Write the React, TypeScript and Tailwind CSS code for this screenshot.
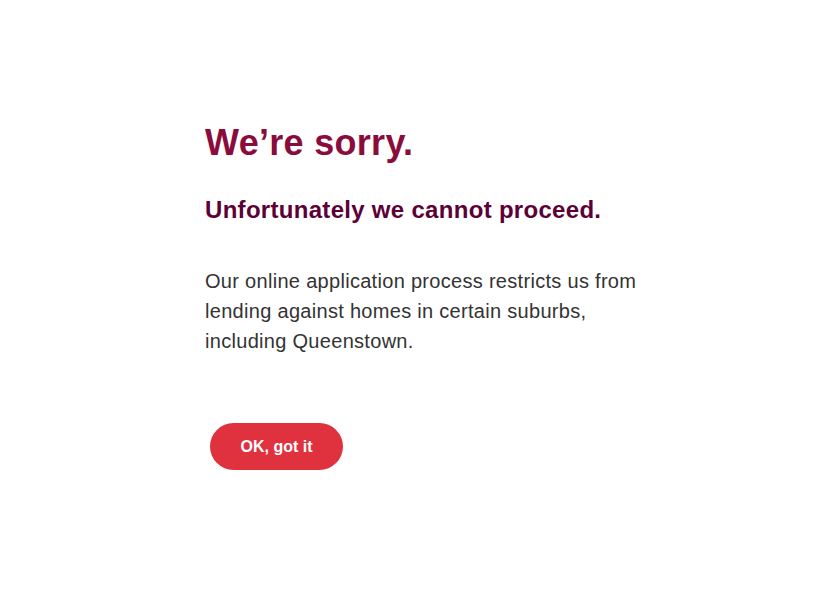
export default function App() {
  return (
    <div
      className="min-h-screen bg-white"
      style={{ fontFamily: '"Liberation Sans", Arial, sans-serif' }}
    >
      <div className="pl-[205px] pt-[123px]">
        <h1 className="text-[36px] leading-[40px] font-bold tracking-[0.3px] text-[#8a0c3d]">
          We’re sorry.
        </h1>
        <h2 className="mt-[33px] text-[24px] leading-[28px] font-bold tracking-[0.3px] text-[#5c0136]">
          Unfortunately we cannot proceed.
        </h2>
        <p className="mt-[42px] w-[450px] text-[20px] leading-[30px] tracking-[0.3px] text-[#333]">
          Our online application process restricts us from lending against homes in certain suburbs,
          including Queenstown.
        </p>
        <button className="mt-[67px] ml-[5px] h-[47px] w-[133px] rounded-full bg-[#e0313f] text-[16px] font-bold text-white">
          OK, got it
        </button>
      </div>
    </div>
  );
}
